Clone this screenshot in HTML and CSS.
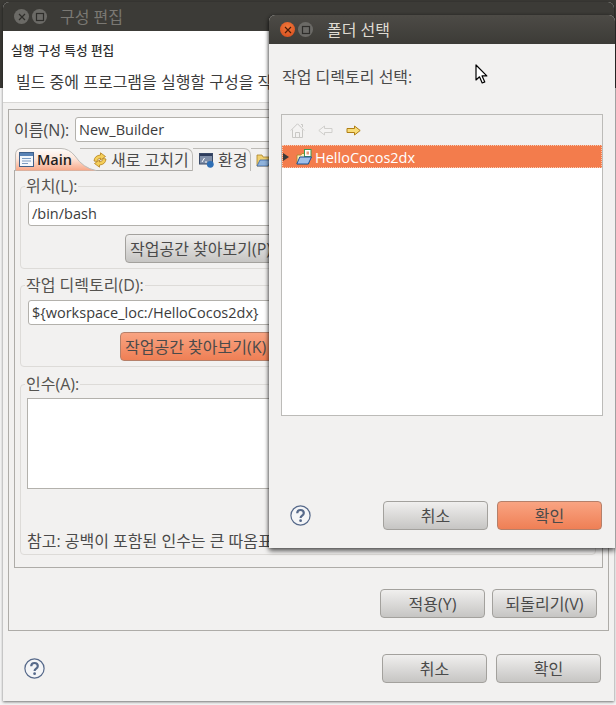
FILE: index.html
```html
<!DOCTYPE html>
<html lang="ko">
<head>
<meta charset="utf-8">
<title>구성 편집</title>
<link rel="stylesheet" href="styles.css">
</head>
<body>
<div class="desk-strip"></div>
<section class="win back">
  <header class="titlebar inactive">
    <span class="ctl"><svg width="10" height="10" viewBox="0 0 10 10"><path d="M2 2l6 6M8 2l-6 6" stroke="#2e2d2a" stroke-width="1.2"/></svg></span>
    <span class="ctl"><svg width="10" height="10" viewBox="0 0 10 10"><rect x="1.5" y="1.5" width="7" height="7" fill="none" stroke="#2e2d2a" stroke-width="1.2"/></svg></span>
    <span class="title">구성 편집</span>
  </header>
  <div class="banner">
    <h1>실행 구성 특성 편집</h1>
    <p>빌드 중에 프로그램을 실행할 구성을 작</p>
  </div>
  <div class="content">
    <div class="frame">
      <div class="name-row">
        <label class="name-label">이름(N):</label>
        <div class="input name-input">New_Builder</div>
      </div>
      <div class="tabs">
        <div class="tab main-tab">
          <svg class="tab-bg" width="82" height="23" viewBox="0 0 82 23"><defs><linearGradient id="tg" x1="0" y1="0" x2="0" y2="1"><stop offset="0" stop-color="#fdfcfb"/><stop offset="0.45" stop-color="#fde6da"/><stop offset="1" stop-color="#f8a483"/></linearGradient></defs><path d="M0.5 23V7Q0.5 0.5 7 0.5H46Q54 0.5 60 8Q68 20 81 22.500V23Z" fill="url(#tg)" stroke="#bdbbb7"/></svg>
          <svg class="icon" width="15" height="15" viewBox="0 0 15 15"><rect x="0.5" y="0.5" width="14" height="14" fill="#f4f7fb" stroke="#3f5f88"/><rect x="1" y="1" width="13" height="3" fill="#5b83b5"/><path d="M3 6.500h9M3 9h9M3 11.500h6" stroke="#7d9cc2"/></svg>
          <span class="tab-text strong">Main</span>
        </div>
        <div class="tab refresh-tab">
          <svg class="icon" width="14" height="16" viewBox="0 0 14 16"><path d="M1 9Q1.500 3.500 7.500 3V0.800l5 3.700-5 3.500V6Q4.500 6.300 3.800 9.500Z" fill="#f5cf5a" stroke="#b5811c" stroke-width="0.8"/><path d="M13 7Q12.500 12.500 6.500 13v2.200l-5-3.700 5-3.500v2Q9.500 9.700 10.200 6.500Z" fill="#f5cf5a" stroke="#b5811c" stroke-width="0.8"/></svg>
          <span class="tab-text">새로 고치기</span>
        </div>
        <div class="tab env-tab">
          <svg class="icon" width="15" height="15" viewBox="0 0 15 15"><rect x="0.500" y="0.500" width="13" height="10.500" fill="#7f8ea8" stroke="#3a4a68"/><rect x="1" y="1" width="12" height="2" fill="#2d3c5c"/><path d="M3 9l2.500-4M6 9h2" stroke="#fff"/><circle cx="11.300" cy="11.300" r="3.400" fill="#2f6fb5"/></svg>
          <span class="tab-text">환경</span>
        </div>
        <div class="tab plain-tab">
          <svg class="icon" width="16" height="14" viewBox="0 0 16 14"><path d="M1 13V2h5l1 2h6v9Z" fill="#f0d070" stroke="#a98428" stroke-width="0.8"/><path d="M1 13l3-6h11l-3 6Z" fill="#8fb3dc" stroke="#3a68a8" stroke-width="0.8"/></svg>
        </div>
      </div>
      <div class="tab-body">
        <fieldset class="group loc-group">
          <legend>위치(L):</legend>
          <div class="input field">/bin/bash</div>
          <div class="btn-row loc-btns">
            <button class="btn browse-p">작업공간 찾아보기(P)</button>
          </div>
        </fieldset>
        <fieldset class="group dir-group">
          <legend>작업 디렉토리(D):</legend>
          <div class="input field">${workspace_loc:/HelloCocos2dx}</div>
          <div class="btn-row dir-btns">
            <button class="btn accent browse-k">작업공간 찾아보기(K)</button>
          </div>
        </fieldset>
        <fieldset class="group arg-group">
          <legend>인수(A):</legend>
          <div class="textarea"></div>
          <p class="note">참고: 공백이 포함된 인수는 큰 따옴표</p>
        </fieldset>
      </div>
      <div class="apply-row">
        <button class="btn">적용(Y)</button>
        <button class="btn">되돌리기(V)</button>
      </div>
    </div>
    <div class="footer back-footer">
      <svg class="help" width="21" height="21" viewBox="0 0 21 21"><circle cx="10.5" cy="10.5" r="9.6" fill="#f4f5f7" stroke="#56698a" stroke-width="1.2"/><path d="M7.2 8.2Q7.3 5 10.5 5T13.8 8Q13.8 9.7 12 10.7Q10.6 11.5 10.6 13" fill="none" stroke="#56698a" stroke-width="2.2"/><circle cx="10.6" cy="15.7" r="1.4" fill="#56698a"/></svg>
      <span class="spacer"></span>
      <button class="btn">취소</button>
      <button class="btn">확인</button>
    </div>
  </div>
</section>

<section class="win front">
  <header class="titlebar">
    <span class="ctl close"><svg width="10" height="10" viewBox="0 0 10 10"><path d="M2 2l6 6M8 2l-6 6" stroke="#4a1c08" stroke-width="1.2"/></svg></span>
    <span class="ctl"><svg width="10" height="10" viewBox="0 0 10 10"><rect x="1.5" y="1.5" width="7" height="7" fill="none" stroke="#2e2d2a" stroke-width="1.2"/></svg></span>
    <span class="title lit">폴더 선택</span>
  </header>
  <div class="front-body">
    <p class="prompt">작업 디렉토리 선택:</p>
    <div class="tree">
      <div class="toolbar">
        <svg width="15" height="15" viewBox="0 0 15 15"><path d="M0.800 7.500L7.500 0.800 14.200 7.500M2.500 6.500v8h10v-8M5.500 14.500v-5h4v5M11 1.500h1.500V4" fill="#f4f3f2" stroke="#c9c8c5"/></svg>
        <svg width="15" height="15" viewBox="0 0 15 15"><path d="M0.800 7.500L6.500 3V5.500h7.500v4H6.500V12Z" fill="#f4f3f2" stroke="#d0cfcc"/></svg>
        <svg width="15" height="15" viewBox="0 0 15 15"><path d="M14.200 7.500L8.500 3V5.500H1v4H8.500V12Z" fill="#f8dc78" stroke="#b07f14"/></svg>
      </div>
      <div class="tree-row">
        <span class="arrow"></span>
        <svg class="folder" width="16" height="16" viewBox="0 0 16 16"><path d="M1 15V6h4l1-1.500h7V15Z" fill="#fbeebc" stroke="#b08a2c" stroke-width="0.9"/><rect x="8.500" y="0.500" width="6.500" height="7" fill="#fff" stroke="#3f9a50"/><rect x="10.500" y="2.500" width="2.500" height="3" fill="#e59a7a"/><path d="M0.800 15l3-7h11.700l-3.300 7Z" fill="#9fc0ea" stroke="#1f4f98"/></svg>
        <span class="row-label">HelloCocos2dx</span>
      </div>
    </div>
    <div class="footer front-footer">
      <svg class="help" width="21" height="21" viewBox="0 0 21 21"><circle cx="10.5" cy="10.5" r="9.6" fill="#f4f5f7" stroke="#56698a" stroke-width="1.2"/><path d="M7.200 8.200Q7.300 5 10.500 5T13.800 8Q13.800 9.700 12 10.700Q10.600 11.500 10.600 13" fill="none" stroke="#56698a" stroke-width="2.200"/><circle cx="10.600" cy="15.700" r="1.400" fill="#56698a"/></svg>
      <span class="spacer"></span>
      <button class="btn">취소</button>
      <button class="btn accent">확인</button>
    </div>
  </div>
</section>

<svg class="cursor" width="14" height="21" viewBox="0 0 14 21"><path d="M1 1v15l3.500-3.200 2.700 6.200 2.600-1.100-2.700-6h4.700Z" fill="#fff" stroke="#000" stroke-width="1.200" stroke-linejoin="round"/></svg>
</body>
</html>
```
FILE: styles.css
```css
* { box-sizing: border-box; }
html, body { margin: 0; padding: 0; }
body {
  width: 616px; height: 705px; overflow: hidden; position: relative;
  background: #f5f5f5; color: #4a4a4a;
  font: 16px/20px "Open Sans", "Noto Sans CJK KR", sans-serif;
}
.desk-strip { position: absolute; left: 0; top: 0; width: 616px; height: 88px; background: #3a3935; }
.win {
  position: absolute; background: #f2f1f0; display: flex; flex-direction: column; overflow: hidden;
  border-radius: 6px 6px 0 0;
}
.back { left: 3px; top: 2px; width: 611px; height: 699px; z-index: 1; box-shadow: 0 1px 3px rgba(0,0,0,.55); }
.front { left: 269px; top: 15px; width: 346px; height: 533px; z-index: 2; box-shadow: 0 3px 5px rgba(0,0,0,.6), -1px 0 3px rgba(0,0,0,.3); }

.titlebar {
  height: 29px; flex: none; display: flex; align-items: center; padding: 0 0 0 11px; gap: 3px;
  background: linear-gradient(#4d4b46, #3c3b37);
}
.back .titlebar { background: #3c3b37; }
.ctl {
  width: 15px; height: 15px; border-radius: 50%; background: #6b6a66;
  display: flex; align-items: center; justify-content: center;
}
.close { background: radial-gradient(circle at 50% 35%, #f47a3c, #d2481a); }
.title { margin-left: 10px; color: #7a7873; }
.title.lit { margin-left: 11px; color: #dfdbd2; }

.banner { height: 72px; flex: none; background: #fff; border-bottom: 1px solid #d8d7d5; padding: 10px 0 0 8px; }
.banner h1 { margin: 0; font-size: 12.7px; line-height: 18px; font-weight: 500; color: #2f2f2f; }
.banner p { margin: 13px 0 0 5px; line-height: 20px; white-space: nowrap; color: #3c3c3c; }

.content { flex: 1; display: flex; flex-direction: column; padding: 6px 6px 0 5px; }
.frame { height: 522px; border: 1px solid #aeaca8; padding: 7px 5px 0 5px; display: flex; flex-direction: column; flex: none; margin-right: -1px; }
.name-row { display: flex; align-items: center; gap: 5px; height: 25px; flex: none; }
.name-label { width: 56px; white-space: nowrap; }
.input {
  background: #fff; border: 1px solid #b3b1ac; border-radius: 3px; height: 25px;
  padding: 0 3px; font-size: 14.5px; line-height: 23px; color: #3c3c3c; white-space: nowrap;
}
.name-input { flex: 1; }

.tabs { display: flex; height: 23px; margin-top: 6px; position: relative; z-index: 1; flex: none; align-items: stretch; }
.tab { position: relative; display: flex; align-items: center; gap: 4px; height: 23px; border: 1px solid #bdbbb7; border-bottom: 0; border-left: 0; border-radius: 0 7px 0 0; background: #f2f1f0; }
.main-tab { width: 65px; padding-left: 4px; gap: 3px; border: 0; background: none; z-index: 2; margin-left: 1px; }
.tab-bg { position: absolute; left: 0; top: 0; }
.main-tab .icon, .main-tab .tab-text { position: relative; }
.tab-text { white-space: nowrap; }
.tab-text.strong { color: #1f1f1f; font-size: 14.5px; font-weight: 600; }
.refresh-tab { width: 113px; padding-left: 13px; background: none; z-index: 3; }
.env-tab { width: 58px; padding-left: 6px; }
.plain-tab { width: 80px; padding-left: 5px; }

.tab-body { height: 398px; flex: none; border: 1px solid #aeaca8; margin: -1px 0 0 0; padding: 5px 6px 0 5px; display: flex; flex-direction: column; }
.group { margin: 0; border: 1px solid #dddbd8; border-radius: 4px; padding: 0 7px; min-width: 0; }
.group legend { padding: 0 1px; margin-left: -3px; color: #55534f; line-height: 20px; height: 20px; }
.loc-group { height: 93px; }
.dir-group { height: 92px; margin-top: 6px; }
.arg-group { height: 181px; margin-top: 7px; }
.field { margin-top: 5px; }
.btn-row { display: flex; gap: 6px; }
.loc-btns { margin: 8px 0 0 97px; }
.dir-btns { margin: 7px 0 0 92px; }
.btn {
  font: inherit; color: #4a4a4a; height: 29px; width: 105px; padding: 0; flex: none;
  border: 1px solid #a3a19d; border-radius: 4px; white-space: nowrap;
  background: linear-gradient(#f0efee, #c6c5c3);
}
.btn.accent { background: linear-gradient(#f9a482, #ef7f55); border-color: #b5806a; }
.browse-p, .browse-k { width: 170px; padding-left: 4px; text-align: left; }
.textarea { height: 91px; margin: 4px 0 0 -1px; background: #fff; border: 1px solid #b3b1ac; }
.note { margin: 42px 0 0 -1px; white-space: nowrap; }

.apply-row { display: flex; justify-content: flex-end; gap: 7px; padding: 21px 6px 0 0; }
.spacer { flex: 1; }
.footer { display: flex; align-items: center; gap: 9px; }
.back-footer { height: 29px; margin-top: 23px; padding: 0 7px 0 16px; }
.front-footer { height: 29px; margin: 85px -12px 0; padding: 0 13px 0 21px; }

.front-body { flex: 1; padding: 0 12px; display: flex; flex-direction: column; }
.prompt { margin: 23px 0 0 1px; height: 20px; }
.tree { height: 302px; margin-top: 27px; border: 1px solid #bcbbb8; background: #fff; display: flex; flex-direction: column; flex: none; }
.toolbar { height: 30px; background: #f2f1f0; display: flex; align-items: center; gap: 13px; padding: 1px 0 0 8px; flex: none; }
.tree-row {
  height: 23px; display: flex; align-items: center; background: #f37c4c; color: #fff; font-size: 14.5px;
  outline: 1px dotted #f6c9b2; outline-offset: -1px; padding-left: 1px;
}
.row-label { padding-top: 2px; }
.arrow { width: 0; height: 0; border-left: 6px solid #3a3a3a; border-top: 4px solid transparent; border-bottom: 4px solid transparent; margin-right: 7px; }
.folder { margin-right: 3px; }
.cursor { position: absolute; left: 475px; top: 64px; z-index: 3; }
```
